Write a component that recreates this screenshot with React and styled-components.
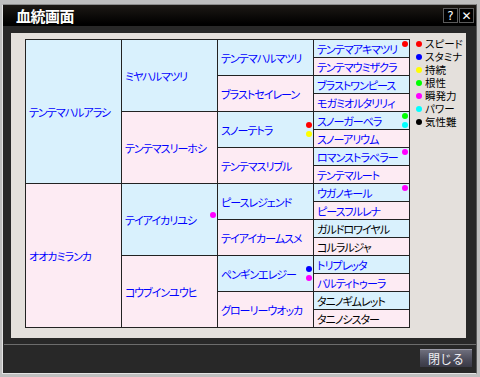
import styled, { createGlobalStyle } from "styled-components"

const GlobalStyle = createGlobalStyle`
  html, body {
    margin: 0;
    padding: 0;
    background: #bfbfbf;
  }
  body {
    width: 480px;
    height: 377px;
    overflow: hidden;
    font-family: "Noto Sans CJK JP", "DejaVu Sans", sans-serif;
  }
`

// Window frame
const Window = styled.div`
  box-sizing: border-box;
  width: 475px;
  height: 370px;
  margin: 4px 0 0 2px;
  display: flex;
  flex-direction: column;
  background: #282828;
  border-top: 1px solid #8c8c8c;
  border-left: 1px solid #e4e4e4;
  border-bottom: 1px solid #e4e4e4;
  border-right: 1px solid #5a5a5a;
`

const TitleBar = styled.div`
  height: 21px;
  display: flex;
  align-items: center;
  padding: 0 2px 0 13px;
  background: linear-gradient(#1d1915, #000 90%);
`

const Title = styled.h1`
  flex: 1;
  margin: 0;
  font-size: 15px;
  font-weight: bold;
  color: #fff;
  letter-spacing: -0.5px;
`

const TitleButton = styled.button`
  box-sizing: border-box;
  width: 15px;
  height: 15px;
  margin-left: 1px;
  padding: 0;
  background: #000;
  border: 1px solid #5c5c5c;
  color: #fff;
  font-family: "DejaVu Sans", sans-serif;
  font-size: 12px;
  line-height: 12px;
  display: grid;
  place-content: center;
`

// Pedigree panel
const Panel = styled.section`
  box-sizing: border-box;
  width: 455px;
  height: 305px;
  margin: 7px 0 0 8px;
  padding: 6px 0 0 14px;
  background: #e4e0dc;
  display: flex;
  column-gap: 6px;
`

const Pedigree = styled.div`
  display: grid;
  grid-template-columns: repeat(4, 96px);
  grid-template-rows: repeat(16, 18px);
  grid-auto-flow: column;
  border-top: 1px solid #222;
  border-left: 1px solid #222;
  align-self: flex-start;
`

const Cell = styled.div`
  position: relative;
  box-sizing: border-box;
  grid-row: span ${(p) => p.$span};
  border-right: 1px solid #222;
  border-bottom: 1px solid #222;
  background: ${(p) => (p.$female ? "#fdebf3" : "#d9f1fd")};
  color: ${(p) => (p.$plain ? "#000" : "#0000ff")};
  display: flex;
  align-items: center;
  padding-left: 3px;
  font-size: 11px;
  letter-spacing: -1px;
  font-feature-settings: "palt";
  white-space: nowrap;
  overflow: hidden;
`

const DotStack = styled.div`
  position: absolute;
  right: 1px;
  top: 50%;
  height: 15px;
  margin-top: -7.5px;
  display: flex;
  flex-direction: column;
  gap: 3px;
`

const Dot = styled.span`
  flex: none;
  width: 6px;
  height: 6px;
  border-radius: 50%;
  background: ${(p) => p.$color};
`

// Legend
const Legend = styled.ul`
  list-style: none;
  margin: -2px 0 0;
  padding: 0;
`

const LegendItem = styled.li`
  display: flex;
  align-items: center;
  column-gap: 3px;
  height: 13px;
  line-height: 13px;
  font-size: 10.5px;
  font-feature-settings: "palt";
  color: #000;
`

// Footer
const Separator = styled.hr`
  margin: 6px 0 0 1px;
  border: 0;
  height: 1px;
  background: #6c6c6c;
`

const Footer = styled.div`
  display: flex;
  justify-content: flex-end;
  padding: 4px 4px 0 0;
`

const CloseButton = styled.button`
  box-sizing: border-box;
  width: 52px;
  height: 18px;
  padding: 0;
  border: 0;
  border-top: 1px solid #9a9aa6;
  background: linear-gradient(#6e6e7c, #4a4a58 60%, #3a3a46);
  color: #f0f0f4;
  font-family: "Noto Sans CJK JP", sans-serif;
  font-size: 12px;
  line-height: 16px;
`

const COLORS = {
  red: "#ff0000",
  blue: "#0000ff",
  yellow: "#ffff00",
  green: "#00ff00",
  magenta: "#ff00ff",
  cyan: "#00ffff",
  black: "#000000",
}

const legend = [
  ["red", "スピード"],
  ["blue", "スタミナ"],
  ["yellow", "持続"],
  ["green", "根性"],
  ["magenta", "瞬発力"],
  ["cyan", "パワー"],
  ["black", "気性難"],
]

const columns = [
  [
    { name: "テンテマハルアラシ" },
    { name: "オオカミランカ" },
  ],
  [
    { name: "ミヤハルマツリ" },
    { name: "テンテマスリーホシ" },
    { name: "テイアイカリユシ", dots: ["magenta"] },
    { name: "コウブインユウヒ" },
  ],
  [
    { name: "テンテマハルマツリ" },
    { name: "ブラストセイレーン" },
    { name: "スノーテトラ", dots: ["red", "yellow"] },
    { name: "テンテマスリブル" },
    { name: "ピースレジェンド" },
    { name: "テイアイカームスメ" },
    { name: "ペンギンエレジー", dots: ["blue", "magenta"] },
    { name: "グローリーウオッカ" },
  ],
  [
    { name: "テンテマアキマツリ", dots: ["red"] },
    { name: "テンテマウミザクラ" },
    { name: "ブラストワンピース" },
    { name: "モガミオルタリリィ" },
    { name: "スノーガーベラ", dots: ["green", "cyan"] },
    { name: "スノーアリウム" },
    { name: "ロマンストラベラー", dots: ["magenta"] },
    { name: "テンテマルート" },
    { name: "ウガノキール", dots: ["magenta"] },
    { name: "ピースフルレナ" },
    { name: "ガルドロワイヤル", plain: true },
    { name: "コルラルジャ", plain: true },
    { name: "トリプレッタ" },
    { name: "バルティトゥーラ" },
    { name: "タニノギムレット", plain: true },
    { name: "タニノシスター", plain: true },
  ],
]

function App() {
  return (
    <>
      <GlobalStyle />
      <Window>
        <TitleBar>
          <Title>血統画面</Title>
          <TitleButton>?</TitleButton>
          <TitleButton>✕</TitleButton>
        </TitleBar>

        <Panel>
          <Pedigree>
            {columns.map((horses, c) =>
              horses.map((horse, i) => (
                <Cell
                  key={`${c}-${i}`}
                  $span={16 / horses.length}
                  $female={i % 2 === 1}
                  $plain={horse.plain}
                >
                  {horse.name}
                  {horse.dots && (
                    <DotStack>
                      {horse.dots.map((d) => (
                        <Dot key={d} $color={COLORS[d]} />
                      ))}
                    </DotStack>
                  )}
                </Cell>
              ))
            )}
          </Pedigree>

          <Legend>
            {legend.map(([color, label]) => (
              <LegendItem key={label}>
                <Dot $color={COLORS[color]} />
                {label}
              </LegendItem>
            ))}
          </Legend>
        </Panel>

        <Separator />
        <Footer>
          <CloseButton>閉じる</CloseButton>
        </Footer>
      </Window>
    </>
  )
}

export default App
